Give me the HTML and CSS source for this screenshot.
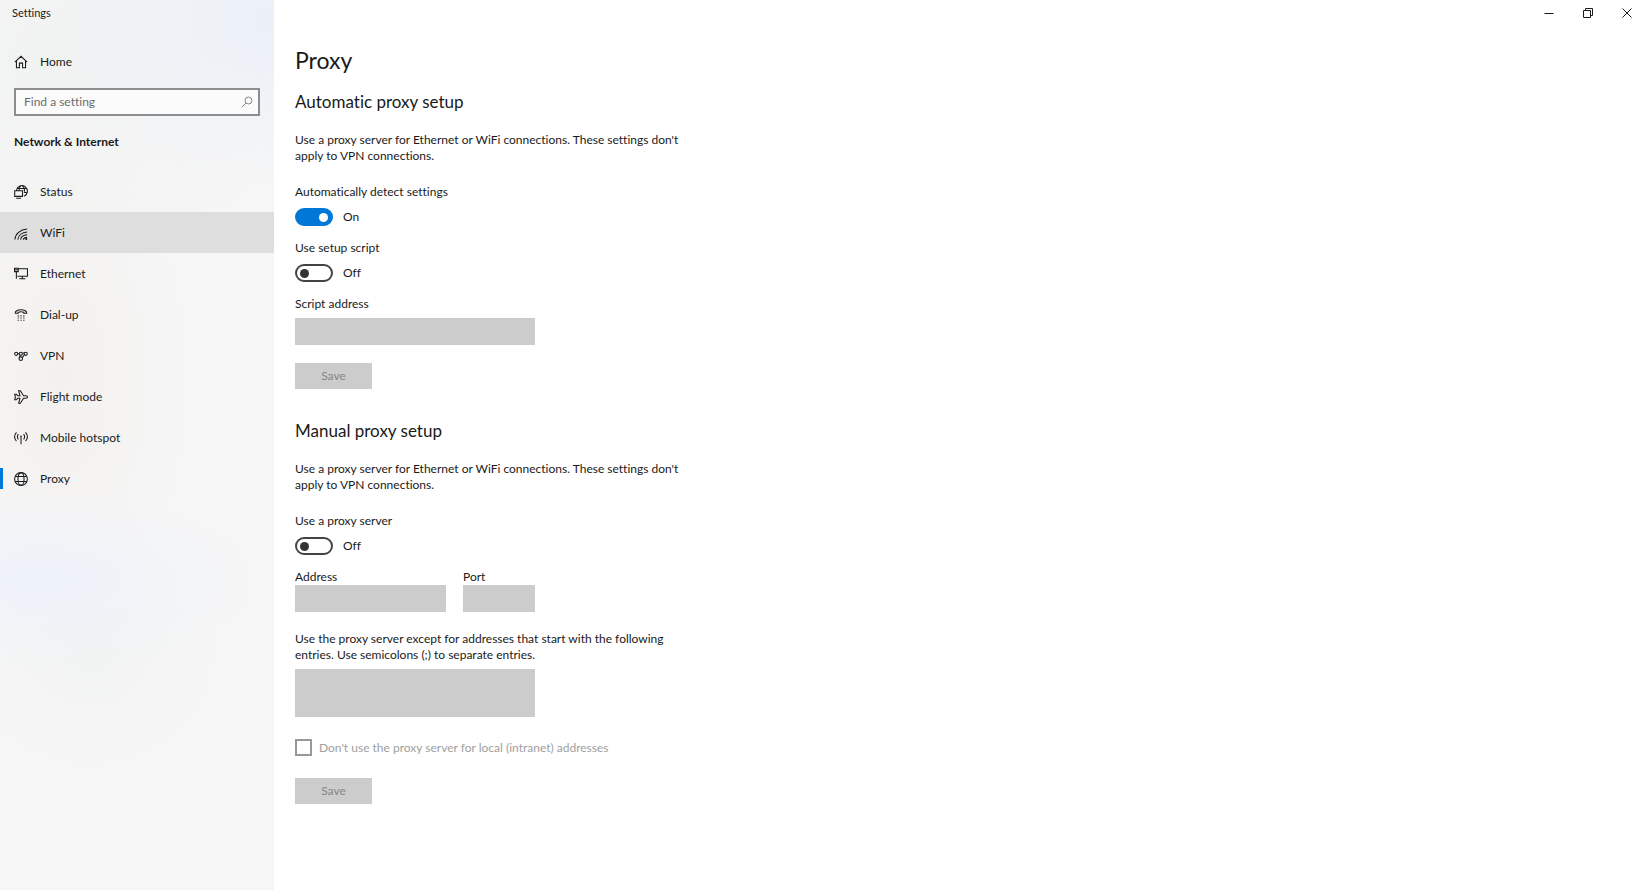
FILE: index.html
```
<!DOCTYPE html>
<html lang="en">
<head>
    <meta charset="UTF-8">
    <meta name="viewport" content="width=device-width, initial-scale=1.0">
    <title>Settings</title>
    <link rel="stylesheet" href="styles.css">
</head>
<body>
    <!-- Sidebar -->
    <aside class="sidebar">
        <div class="app-title">Settings</div>
        <a class="nav-link home" href="#">
            <svg class="icon" viewBox="0 0 16 16"><path d="M1 8.2 8 1.5l7 6.7M2.8 6.8v7.7h3.4V9.3h3.6v5.2h3.4V6.8"/></svg>
            Home
        </a>
        <form class="search">
            <input type="text" class="search-input" placeholder="Find a setting" aria-label="Find a setting">
            <button type="button" class="search-btn" aria-label="Search">
                <svg class="icon" viewBox="0 0 16 16"><circle cx="10" cy="6" r="4.6"/><path d="M6.6 9.4 1 15"/></svg>
            </button>
        </form>
        <h2 class="category">Network &amp; Internet</h2>
        <nav class="nav">
            <a class="nav-link" href="#">
                <svg class="icon" viewBox="0 0 16 16"><path d="M2.800 6A6.300 6.300 0 1 1 11.500 12.800M8 .8C6.300 2.400 5.800 4 5.700 6M9.500.8c2 1.600 2.700 3.800 2.500 7M3.500 4h11M11.500 8.500h3.700M.8 6.500h9v6.500H.8zM2.500 15.200h5.500"/></svg>
                Status
            </a>
            <a class="nav-link hovered" href="#">
                <svg class="icon" viewBox="0 0 16 16"><path d="M1 15.500C1.500 9 7 4 15 3.500M4.300 15.500C5 11 9 7.200 15 6.800M7.500 15.500c.5-3 3-5.200 7.500-5.500M10.500 15.500c.5-1.500 2-2.300 4.500-2.500"/><circle class="fill" cx="14" cy="14.800" r="1.200"/></svg>
                WiFi
            </a>
            <a class="nav-link" href="#">
                <svg class="icon" viewBox="0 0 16 16"><path d="M5 2h10.400v8.500H4M9.500 10.500v3M6 13.500h7M.6 1.500h4.200v3.800H.6zM.6 3.200h4.200M2.700 5.300v8.200"/></svg>
                Ethernet
            </a>
            <a class="nav-link" href="#">
                <svg class="icon" viewBox="0 0 16 16"><path d="M1.500 6C1 3.500 4 2 8 2s7 1.500 6.500 4h-3.300V4.800C9.500 4.200 6.500 4.200 4.800 4.800V6z"/><path class="dots" d="M4.200 9h1.300M7.400 9h1.300M10.600 9h1.300M4.200 11.500h1.300M7.400 11.500h1.300M10.600 11.500h1.300M4.200 14h1.300M7.400 14h1.300M10.600 14h1.300"/></svg>
                Dial-up
            </a>
            <a class="nav-link" href="#">
                <svg class="icon" viewBox="0 0 16 16"><circle cx="2.500" cy="5.500" r="1.800"/><circle cx="7.800" cy="5.500" r="1.800"/><circle cx="13.400" cy="5.500" r="1.800"/><circle cx="7.700" cy="11" r="2"/><path d="M4.300 5.500H6M9.600 4.500h2.200M11.800 6.400 9.500 10M6 9.800l1.200-2.500"/></svg>
                VPN
            </a>
            <a class="nav-link" href="#">
                <svg class="icon" viewBox="0 0 16 16"><path d="M.8 4.800h1.800L4.300 6.500h2.500L5.300.8h2l3.600 5.700h2.700c2.400.3 2.400 2.700 0 3h-2.700l-3.600 5.700h-2l1.500-5.700H4.300l-1.700 1.700H.8L1.600 8z"/></svg>
                Flight mode
            </a>
            <a class="nav-link" href="#">
                <svg class="icon" viewBox="0 0 16 16"><path d="M2.800 1.500c-2.600 3-2.600 7 0 10M13.200 1.500c2.600 3 2.600 7 0 10M5 3.500c-1.500 2-1.500 4 0 6M11 3.500c1.500 2 1.500 4 0 6M8 6v9"/><circle class="fill" cx="8" cy="6" r=".9"/></svg>
                Mobile hotspot
            </a>
            <a class="nav-link active" href="#">
                <svg class="icon" viewBox="0 0 16 16"><circle cx="8" cy="8" r="7.300"/><ellipse cx="8" cy="8" rx="3.500" ry="7.300"/><path d="M1.500 5.200h13M1.500 10.800h13"/></svg>
                Proxy
            </a>
        </nav>
    </aside>

    <div class="window">
        <!-- Window controls -->
        <header class="window-bar">
            <button type="button" class="window-btn" aria-label="Minimize">
                <svg class="icon" viewBox="0 0 10 10"><path d="M.5 5.500h9"/></svg>
            </button>
            <button type="button" class="window-btn" aria-label="Restore">
                <svg class="icon" viewBox="0 0 10 10"><path d="M.5 2.500h7v7h-7zM2.500 2.500v-2h7v7h-2"/></svg>
            </button>
            <button type="button" class="window-btn" aria-label="Close">
                <svg class="icon" viewBox="0 0 10 10"><path d="M.5.5l9 9M9.500.5l-9 9"/></svg>
            </button>
        </header>

        <main class="content">
            <h1>Proxy</h1>

            <!-- Automatic setup -->
            <section class="section">
                <h2>Automatic proxy setup</h2>
                <p class="description">Use a proxy server for Ethernet or WiFi connections. These settings don't apply to VPN connections.</p>
                <div class="setting">
                    <label for="auto-detect">Automatically detect settings</label>
                    <div class="switch-row">
                        <input type="checkbox" class="switch" id="auto-detect" checked>
                        <span class="switch-state">On</span>
                    </div>
                </div>
                <div class="setting">
                    <label for="use-script">Use setup script</label>
                    <div class="switch-row">
                        <input type="checkbox" class="switch" id="use-script">
                        <span class="switch-state">Off</span>
                    </div>
                </div>
                <div class="field">
                    <label for="script-address">Script address</label>
                    <input type="text" class="box" id="script-address" disabled>
                </div>
                <button type="button" class="save" disabled>Save</button>
            </section>

            <!-- Manual setup -->
            <section class="section">
                <h2>Manual proxy setup</h2>
                <p class="description">Use a proxy server for Ethernet or WiFi connections. These settings don't apply to VPN connections.</p>
                <div class="setting">
                    <label for="use-proxy">Use a proxy server</label>
                    <div class="switch-row">
                        <input type="checkbox" class="switch" id="use-proxy">
                        <span class="switch-state">Off</span>
                    </div>
                </div>
                <div class="address-row">
                    <div class="address">
                        <label for="address">Address</label>
                        <input type="text" class="box" id="address" disabled>
                    </div>
                    <div class="port">
                        <label for="port">Port</label>
                        <input type="text" class="box" id="port" disabled>
                    </div>
                </div>
                <div class="field">
                    <label for="exceptions">Use the proxy server except for addresses that start with the following entries. Use semicolons (;) to separate entries.</label>
                    <textarea class="box exceptions" id="exceptions" disabled></textarea>
                </div>
                <div class="check-row">
                    <input type="checkbox" class="check" id="bypass-local" disabled>
                    <label for="bypass-local">Don't use the proxy server for local (intranet) addresses</label>
                </div>
                <button type="button" class="save" disabled>Save</button>
            </section>
        </main>
    </div>
</body>
</html>
```
FILE: styles.css
```
* {
    box-sizing: border-box;
    margin: 0;
    padding: 0;
}
body {
    display: flex;
    min-height: 100vh;
    background-color: #fff;
    color: #1a1a1a;
    font-family: "Segoe UI", Lato, "Open Sans", sans-serif;
    font-size: 12px;
    font-variant-ligatures: none;
    line-height: 16px;
}
input, textarea, button {
    font: inherit;
    color: inherit;
}
label {
    display: block;
}
.icon {
    width: 14px;
    height: 14px;
    flex-shrink: 0;
    fill: none;
    stroke: currentColor;
    stroke-width: 1.2;
}
.icon .fill {
    fill: currentColor;
    stroke: none;
}

/* Sidebar */
.sidebar {
    width: 274px;
    flex-shrink: 0;
    background-color: #f6f6f6;
    background-image:
        radial-gradient(ellipse 220px 90px at 40px 580px, #eef2fa, transparent),
        radial-gradient(ellipse 130px 120px at 90px 650px, #f1f3f2, transparent),
        radial-gradient(ellipse 130px 260px at 60px 380px, #f3f1ef, transparent),
        radial-gradient(ellipse 220px 170px at 274px 20px, #ebf0f8, transparent),
        radial-gradient(ellipse 240px 220px at 60px 60px, #f1f2f2, transparent);
}
.app-title {
    padding: 5px 12px;
    font-size: 11px;
}
.nav-link {
    display: flex;
    align-items: center;
    gap: 12px;
    height: 41px;
    padding: 0 14px;
    color: inherit;
    text-decoration: none;
}
.nav-link:hover,
.nav-link.hovered {
    background-color: #dedede;
}
.nav-link.active {
    background: linear-gradient(#0078d7, #0078d7) left center / 3px 21px no-repeat;
}
.home {
    margin-top: 15px;
}
.search {
    display: flex;
    align-items: center;
    height: 28px;
    margin: 6px 14px 18px;
    border: 2px solid #8b8d8f;
    background-color: #fbfbfb;
}
.search-input {
    flex: 1;
    min-width: 0;
    padding: 0 8px;
    border: none;
    outline: none;
    background: none;
}
.search-input::placeholder {
    color: #6c6c6c;
    opacity: 1;
}
.search-btn {
    display: flex;
    padding: 0 5px;
    border: none;
    background: none;
    color: #777;
}
.search-btn .icon {
    width: 12px;
    height: 12px;
}
.category {
    padding: 0 14px;
    margin-bottom: 21px;
    font-size: 12px;
    font-weight: 700;
}

/* Window */
.window {
    flex: 1;
    min-width: 0;
}
.window-bar {
    display: flex;
    justify-content: flex-end;
    height: 26px;
}
.window-btn {
    display: flex;
    align-items: center;
    justify-content: center;
    width: 39px;
    border: none;
    background: none;
}
.window-btn:hover {
    background-color: #e5e5e5;
}
.window-btn .icon {
    width: 10px;
    height: 10px;
    stroke-width: 1;
}

/* Content */
.content {
    max-width: 440px;
    padding: 18px 20px 40px 21px;
}
h1 {
    margin-bottom: 14px;
    font-size: 23px;
    font-weight: 400;
    line-height: 32px;
}
.section {
    margin-bottom: 30px;
}
.section h2 {
    margin-bottom: 18px;
    font-size: 17px;
    font-weight: 400;
    line-height: 24px;
}
.description {
    margin-bottom: 20px;
}
.setting {
    margin-bottom: 14px;
}
.switch-row {
    display: flex;
    align-items: center;
    gap: 10px;
    margin-top: 8px;
}
.switch {
    display: flex;
    align-items: center;
    width: 38px;
    height: 18px;
    padding: 0 3px;
    appearance: none;
    border: 2px solid #444;
    border-radius: 9px;
}
.switch::before {
    content: "";
    width: 9px;
    height: 9px;
    border-radius: 50%;
    background-color: #333;
}
.switch:checked {
    justify-content: flex-end;
    border-color: #0078d7;
    background-color: #0078d7;
}
.switch:checked::before {
    background-color: #fff;
}
.box {
    display: block;
    width: 100%;
    height: 27px;
    padding: 4px 8px;
    border: none;
    background-color: #ccc;
    resize: none;
}
.field .box {
    width: 240px;
    margin-top: 6px;
}
.field .exceptions {
    height: 48px;
}
.save {
    display: block;
    width: 77px;
    height: 26px;
    margin-top: 18px;
    border: none;
    background-color: #ccc;
    color: #868686;
}
.address-row {
    display: flex;
    gap: 17px;
    width: 240px;
    margin-bottom: 19px;
}
.address {
    flex: 1;
}
.port {
    width: 72px;
}
.check-row {
    display: flex;
    align-items: center;
    gap: 7px;
    margin: 22px 0;
    color: #a0a0a0;
}
.check {
    width: 17px;
    height: 17px;
    appearance: none;
    border: 2px solid #999;
}
```
